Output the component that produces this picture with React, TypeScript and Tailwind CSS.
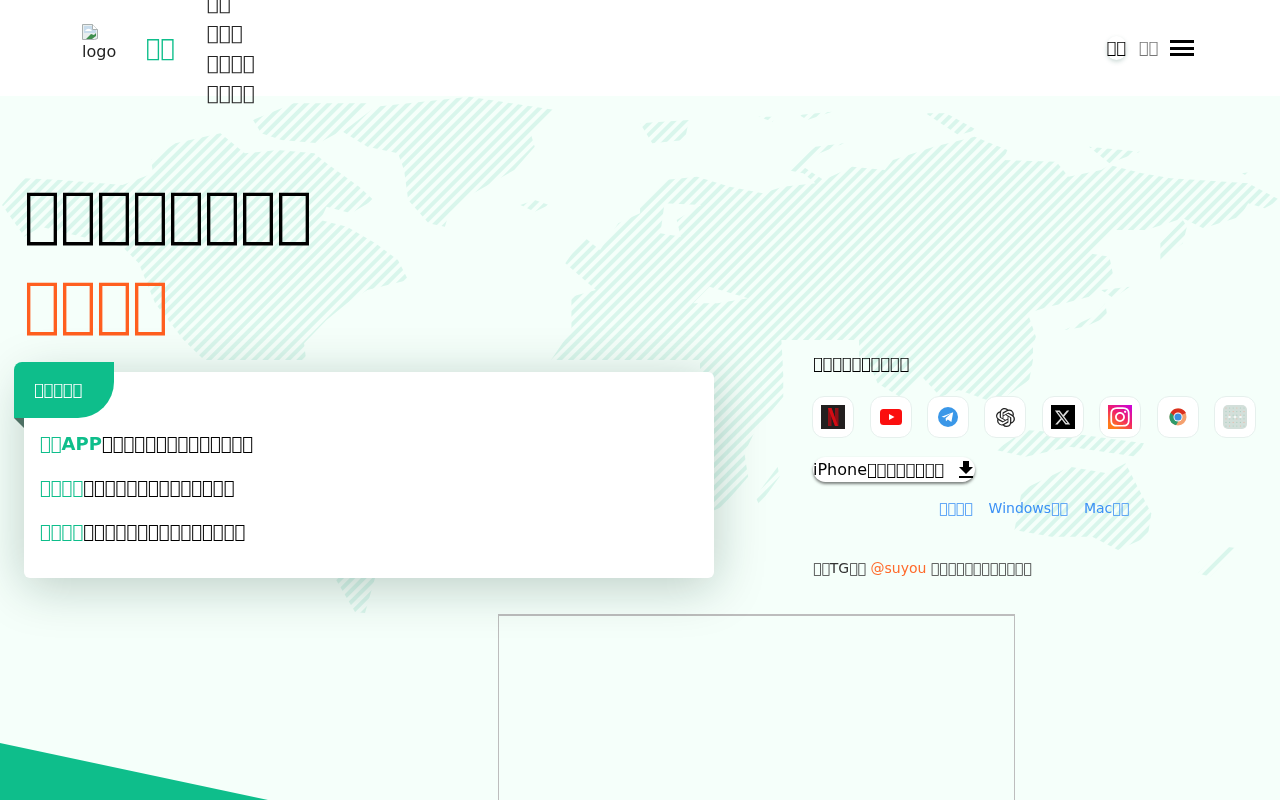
import { SiOpenai } from 'react-icons/si';
import { FaXTwitter, FaInstagram } from 'react-icons/fa6';
import { MdFileDownload } from 'react-icons/md';

// The wording of the reference cannot be read (missing-glyph boxes), so an
// unassigned code point stands in for each of its characters.
const tofu = (n: number) => '\u{40000}'.repeat(n);

type Pt = [number, number];
const a = (pts: Pt[]) => pts.map(([x, y]) => `${x / 2.45},${90 + y / 3}`).join(' ');
const b = (pts: Pt[]) => pts.map(([x, y]) => `${640 + x / 2.45},${90 + y / 3}`).join(' ');
const c = (pts: Pt[]) => pts.map(([x, y]) => `${700 + x / 2.703},${340 + y / 3}`).join(' ');

const land = [
  // north america
  a([[5, 345], [60, 265], [150, 270], [300, 285], [375, 250], [370, 210], [430, 160], [540, 130], [600, 190], [680, 180], [770, 190], [800, 220], [880, 290], [915, 330], [860, 370], [800, 350], [785, 390], [850, 410], [920, 460], [975, 510], [1000, 570], [900, 600], [850, 640], [800, 690], [745, 760], [750, 810], [500, 810], [450, 750], [380, 640], [340, 520], [300, 470], [200, 440], [100, 410], [60, 440]]),
  a([[620, 90], [720, 40], [900, 40], [840, 120], [780, 160], [690, 150], [640, 130]]),
  // greenland
  a([[840, 125], [920, 50], [1150, 20], [1360, 60], [1300, 130], [1310, 170], [1260, 240], [1160, 310], [1100, 370], [1090, 410], [1050, 400], [1000, 330], [990, 240], [975, 190], [900, 170]]),
  a([[1275, 345], [1310, 330], [1345, 345], [1310, 365]]),
  // west europe and africa
  a([[1385, 520], [1430, 440], [1470, 480], [1515, 400], [1568, 370], [1568, 810], [1350, 810], [1400, 720], [1400, 620], [1460, 600]]),
  // eurasia
  b([[0, 350], [60, 270], [140, 260], [220, 290], [300, 310], [350, 290], [430, 280], [400, 250], [360, 240], [430, 170], [500, 160], [440, 190], [400, 230], [450, 270], [520, 230], [600, 240], [620, 210], [720, 170], [820, 140], [900, 180], [890, 210], [1020, 215], [1050, 260], [1130, 240], [1150, 225], [1230, 250], [1300, 265], [1490, 280], [1568, 330], [1530, 355], [1490, 340], [1470, 380], [1380, 415], [1330, 385], [1240, 420], [1160, 420], [1100, 490], [1150, 500], [1160, 560], [1100, 620], [1040, 640], [1000, 650], [950, 670], [970, 740], [950, 810], [0, 810]]),
  b([[1275, 510], [1275, 460], [1330, 390], [1340, 410], [1330, 460]]),
  b([[1040, 720], [1110, 680], [1140, 640], [1145, 680], [1090, 710]]),
  b([[1130, 600], [1200, 590], [1160, 625]]),
  // arctic bits
  b([[0, 100], [120, 90], [110, 150], [30, 160]]),
  b([[290, 80], [330, 80], [325, 95]]),
  b([[390, 75], [470, 65], [410, 90]]),
  b([[700, 70], [750, 70], [825, 120], [780, 135]]),
  b([[1100, 170], [1225, 185], [1150, 220]]),
  b([[1475, 250], [1500, 245], [1490, 260]]),
  // south asia, africa's east side
  c([[0, 0], [225, 0], [225, 170], [150, 270], [120, 340], [130, 410], [60, 500], [0, 530]]),
  c([[150, 470], [210, 380], [215, 410], [160, 495]]),
  c([[430, 0], [900, 0], [900, 60], [890, 120], [800, 190], [700, 150], [650, 170], [600, 110], [540, 170], [480, 130]]),
  c([[800, 330], [880, 270], [1000, 280], [1200, 310], [1180, 350], [1000, 320], [880, 350]]),
  // australia
  c([[850, 570], [870, 450], [1000, 380], [1100, 400], [1150, 370], [1220, 520], [1210, 590], [1130, 630], [1060, 590], [950, 590]]),
  c([[1345, 700], [1420, 620], [1455, 625], [1380, 710]]),
  // south america tip
  '335,578 375,578 365,613 355,612',
];

const holes = [
  b([[60, 340], [150, 345], [90, 390], [100, 440], [50, 430]]),
  b([[170, 590], [265, 625], [190, 640], [130, 640]]),
  c([[220, 0], [430, 0], [430, 190], [330, 160], [225, 100]]),
];

function WorldMap() {
  return (
    <svg className="absolute top-0 left-0" width="1280" height="800" viewBox="0 0 1280 800">
      <defs>
        <pattern id="stripes" width="8" height="8" patternUnits="userSpaceOnUse" patternTransform="rotate(45)">
          <rect width="4" height="8" fill="#d9f6ec" />
        </pattern>
        <clipPath id="land">
          {land.map((p, i) => (
            <polygon key={i} points={p} />
          ))}
        </clipPath>
      </defs>
      <rect width="1280" height="800" fill="url(#stripes)" clipPath="url(#land)" />
      {holes.map((p, i) => (
        <polygon key={i} points={p} fill="#f5fffa" />
      ))}
    </svg>
  );
}

function BrokenImage() {
  return (
    <svg width="16" height="16" viewBox="0 0 16 16">
      <path d="M0.5 0.5h10l5 5v9l-3 1h-12z" fill="#e8eeee" stroke="#a9b0b0" />
      <path d="M2 2h8v4h4v3H2z" fill="#c8dcec" />
      <path d="M3 7c2-3 5-3 7 0z" fill="#fff" />
      <path d="M4 15l5-5 3 1 2-2v3l-4 3z" fill="#3f8f4f" />
      <path d="M10.5 0.5v5h5" fill="#fff" stroke="#a9b0b0" />
    </svg>
  );
}

function Netflix() {
  return (
    <svg width="24" height="24" viewBox="0 0 24 24">
      <rect width="24" height="24" fill="#221f1f" />
      <path d="M7 3h3.5l3.5 10V3h3.5v18H14l-3.5-10v10H7z" fill="#8f0f16" />
      <path d="M7 3h3.5l6.5 18h-3L7 3z" fill="#d50c14" />
    </svg>
  );
}

function Youtube() {
  return (
    <svg width="24" height="24" viewBox="0 0 24 24">
      <rect x="1" y="4" width="22" height="16" rx="3.5" fill="#fb0f0f" />
      <path d="M10 9l5.5 3-5.5 3z" fill="#fff" />
    </svg>
  );
}

function Telegram() {
  return (
    <svg width="24" height="24" viewBox="0 0 24 24">
      <circle cx="12" cy="12" r="10" fill="#3a97e8" />
      <path d="M5.5 11.8L17.2 7.2 15.4 17l-3.6-2.6-1.8 1.8-.4-3 5.4-4.6-6.8 4z" fill="#fff" />
    </svg>
  );
}

function Chrome() {
  return (
    <svg width="24" height="24" viewBox="0 0 24 24">
      <circle cx="12" cy="12" r="8.5" fill="#f4a06e" />
      <path d="M12 3.5a8.5 8.5 0 0 0-7.4 4.3L8 13l12-5a8.5 8.5 0 0 0-8-4.500z" fill="#d9301f" />
      <path d="M4.600 7.800a8.500 8.500 0 0 0 5.400 12.500L13 15z" fill="#2e9a6a" />
      <circle cx="12" cy="12" r="4.500" fill="#fff" />
      <circle cx="12" cy="12" r="3.600" fill="#3b8fe0" />
    </svg>
  );
}

function More() {
  const dots: [number, number, string][] = [];
  for (let y = 0; y < 6; y++) {
    for (let x = 0; x < 6; x++) {
      dots.push([3 + x * 3.6, 3 + y * 3.6, (x + y) % 3 === 0 ? '#e9b9a8' : '#a9cfc0']);
    }
  }
  return (
    <svg width="24" height="24" viewBox="0 0 24 24">
      <rect width="24" height="24" rx="5" fill="#d3dfda" />
      {dots.map(([x, y, f], i) => (
        <circle key={i} cx={x} cy={y} r="0.6" fill={f} />
      ))}
      <circle cx="6.500" cy="12" r="1.300" fill="#f4f8f6" />
      <circle cx="12" cy="12" r="1.300" fill="#f4f8f6" />
      <circle cx="17.500" cy="12" r="1.300" fill="#f4f8f6" />
    </svg>
  );
}

const apps = [
  <Netflix />,
  <Youtube />,
  <Telegram />,
  <SiOpenai size={19} color="#222" />,
  <div className="w-6 h-6 bg-black flex items-center justify-center">
    <FaXTwitter size={17} color="#ddd" />
  </div>,
  <div className="w-6 h-6 bg-[linear-gradient(35deg,#ff7a1a_15%,#f0206a_55%,#c800e0)] flex items-center justify-center">
    <FaInstagram size={22} color="#fff" />
  </div>,
  <Chrome />,
  <More />,
];

const features = [
  { lead: `${tofu(2)}APP`, rest: 14 },
  { lead: tofu(4), rest: 14 },
  { lead: tofu(4), rest: 15 },
];

export default function App() {
  return (
    <div className="relative h-[800px] overflow-hidden bg-[#f5fffa] text-black font-['DejaVu_Sans',sans-serif]">
      <WorldMap />

      <header className="relative z-10 h-24 bg-white">
        <div className="h-full flex items-center pl-[82px] pr-[86px] will-change-transform">
          <div className="self-start mt-6 w-[34px]">
            <BrokenImage />
            <span className="block text-base leading-6 text-[#222]">logo</span>
          </div>
          <a className="ml-[30px] text-2xl text-[#0ebe8b]">{tofu(2)}</a>
          <nav className="ml-8 flex flex-col text-xl leading-[30px] text-[#222]">
            <a>{tofu(2)}</a>
            <a>{tofu(3)}</a>
            <a>{tofu(4)}</a>
            <a>{tofu(4)}</a>
          </nav>
          <div className="ml-auto flex items-center text-base">
            <span className="rounded-full shadow-[0_2px_4px_rgba(60,110,100,0.25)] text-black leading-6">{tofu(2)}</span>
            <span className="ml-[13px] text-[#777]">{tofu(2)}</span>
            <button className="ml-3 w-6 h-4 flex flex-col justify-between">
              <span className="h-[3px] bg-black" />
              <span className="h-[3px] bg-black" />
              <span className="h-[3px] bg-black" />
            </button>
          </div>
        </div>
      </header>

      <main className="relative px-6 pt-[73px] will-change-transform">
        <h1 className="text-[60px] leading-[90px] font-normal">
          <div>{tofu(8)}</div>
          <div className="text-[#ff5f1f]">{tofu(4)}</div>
        </h1>

        <div className="flex items-start">
          <section className="relative mt-[23px] w-[690px] h-[206px] bg-white rounded-md shadow-[0_8px_50px_rgba(10,50,40,0.25)] pl-4 pt-[50px]">
            <div className="absolute -left-[10px] -top-[10px] w-[100px] h-14 bg-[#0ebe8b] rounded-tl-lg rounded-br-[36px] flex items-center pl-5 text-base text-white">
              {tofu(5)}
            </div>
            <div className="absolute -left-[10px] top-[46px] w-[10px] h-[10px] bg-[#4d6f63] [clip-path:polygon(0_0,100%_0,100%_100%)]" />
            {features.map((f, i) => (
              <p key={i} className="text-lg leading-[44px]">
                <b className="text-[#0ebe8b]">{f.lead}</b>
                {tofu(f.rest)}
              </p>
            ))}
          </section>

          <aside className="ml-[99px] w-[443px] pt-[3px]">
            <h3 className="text-base leading-6">{tofu(10)}</h3>
            <div className="mt-5 flex justify-between -ml-[0.6px]">
              {apps.map((icon, i) => (
                <div key={i} className="w-[42px] h-[42px] bg-white rounded-xl border border-[#e6f0ed] flex items-center justify-center">
                  {icon}
                </div>
              ))}
            </div>
            <button className="mt-[19px] w-[162px] h-[25px] bg-white rounded-full shadow-[0_2px_3px_rgba(0,0,0,0.5)] flex items-center text-base text-black">
              iPhone{tofu(8)}
              <MdFileDownload size={24} className="ml-[10px] shrink-0" />
            </button>
            <div className="mt-[18px] ml-[126px] flex gap-4 text-sm leading-4 text-[#3b90f5]">
              <a>{tofu(4)}</a>
              <a>Windows{tofu(2)}</a>
              <a>Mac{tofu(2)}</a>
            </div>
            <p className="mt-[42px] text-sm leading-5 text-[#333]">
              {tofu(2)}TG{tofu(2)} <span className="text-[#ff6a2b]">@suyou</span> {tofu(12)}
            </p>
          </aside>
        </div>

        <div className="ml-[474px] mt-9 w-[517px] h-[300px] border border-t-2 border-[#bdbdbd]" />
      </main>

      <div className="absolute left-0 bottom-0 w-[268px] h-[57px] bg-[#0ebe8b] [clip-path:polygon(0_0,100%_100%,0_100%)]" />
    </div>
  );
}
